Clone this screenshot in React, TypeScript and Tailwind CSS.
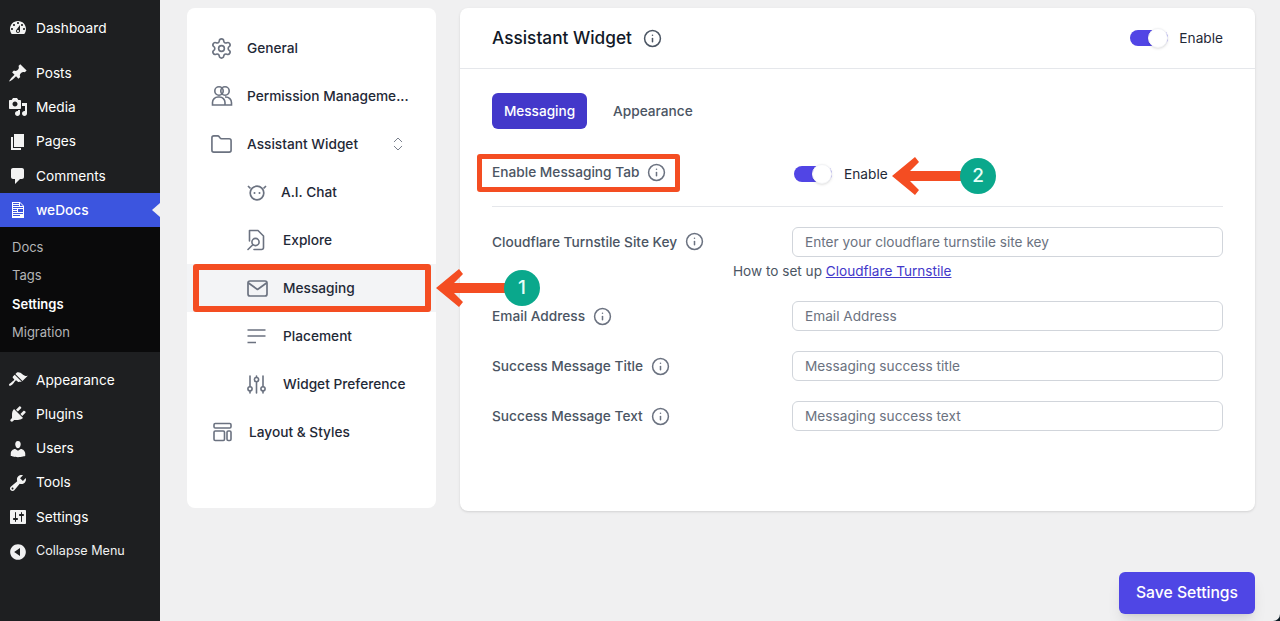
import React from "react";
import { Settings, Info, Folder, ChevronsUpDown } from "lucide-react";

const I = ({ d, className = "" }: { d: string; className?: string }) => (
  <svg viewBox="0 0 20 20" className={"w-5 h-5 fill-current " + className}><path d={d} /></svg>
);

const ic = {
  dashboard: "M3.76 16h12.48c1.1-1.37 1.76-3.11 1.76-5 0-4.42-3.58-8-8-8s-8 3.58-8 8c0 1.89.66 3.63 1.76 5zM10 4c.55 0 1 .45 1 1s-.45 1-1 1-1-.45-1-1 .45-1 1-1zM6 6c.55 0 1 .45 1 1s-.45 1-1 1-1-.45-1-1 .45-1 1-1zm8 0c.55 0 1 .45 1 1s-.45 1-1 1-1-.45-1-1 .45-1 1-1zm-5.37 5.55L12 7v6c0 1.1-.9 2-2 2s-2-.9-2-2c0-.57.24-1.08.63-1.45zM4 10c.55 0 1 .45 1 1s-.45 1-1 1-1-.45-1-1 .45-1 1-1zm12 0c.55 0 1 .45 1 1s-.45 1-1 1-1-.45-1-1 .45-1 1-1zm-5 3c0-.55-.45-1-1-1s-1 .45-1 1 .45 1 1 1 1-.45 1-1z",
  post: "M10.44 3.02l1.82-1.82 6.36 6.35-1.83 1.82c-1.05-.68-2.48-.57-3.41.36l-.75.75c-.92.93-1.04 2.35-.35 3.41l-1.83 1.82-2.41-2.41-2.8 2.79c-.42.42-3.38 2.71-3.8 2.29s1.86-3.39 2.28-3.81l2.79-2.79L4.1 9.36l1.83-1.82c1.05.69 2.48.57 3.4-.36l.75-.75c.93-.92 1.05-2.35.36-3.41z",
  media: "M13 11V4c0-.55-.45-1-1-1h-1.67L9 1H5L3.67 3H2c-.55 0-1 .45-1 1v7c0 .55.45 1 1 1h10c.55 0 1-.45 1-1zM7 4.5c1.38 0 2.5 1.12 2.5 2.5S8.38 9.5 7 9.5 4.5 8.38 4.5 7 5.62 4.5 7 4.5zM14 6h5v10.5c0 1.38-1.12 2.5-2.5 2.5S14 17.88 14 16.5s1.12-2.5 2.5-2.5c.17 0 .34.02.5.05V9h-3V6zm-4 8.05V13h2v3.5c0 1.38-1.12 2.5-2.5 2.5S7 17.88 7 16.5 8.12 14 9.5 14c.17 0 .34.02.5.05z",
  page: "M6 15V2h10v13H6zm-1 1h8v2H3V5h2v11z",
  comments: "M5 2h9c1.1 0 2 .9 2 2v7c0 1.1-.9 2-2 2h-2l-5 5v-5H5c-1.1 0-2-.9-2-2V4c0-1.1.9-2 2-2z",
  doc: "M12 2l4 4v12H4V2h8zM5 3v1h6V3H5zm7 3h3l-3-3v3zM5 5v1h6V5H5zm10 3V7H5v1h10zM5 9v1h4V9H5zm10 3V9h-5v3h5zM5 11v1h4v-1H5zm10 3v-1H5v1h10zm-3 2v-1H5v1h7z",
  appearance: "M14.48 11.06L7.41 3.99l1.5-1.5c.5-.56 2.3-.47 3.51.32 1.21.8 1.43 1.28 2.91 2.1 1.18.64 2.45 1.26 4.45.85zm-.71.71L6.7 4.7 4.93 6.47c-.39.39-.39 1.02 0 1.41l1.06 1.06c.39.39.39 1.03 0 1.42-.6.6-1.43 1.11-2.21 1.69-.35.26-.7.53-1.01.84C1.43 13.23.4 14.75 1.2 15.55c.8.79 2.32-.23 3.65-1.57.31-.31.58-.66.85-1.02.57-.78 1.08-1.61 1.69-2.21.39-.39 1.02-.39 1.41 0l1.06 1.06c.39.39 1.02.39 1.41 0z",
  plugins: "M13.11 4.36L9.87 7.6 8 5.73l3.24-3.24c.35-.34 1.05-.2 1.56.32.52.51.66 1.21.31 1.55zm-8 1.77l.91-1.12 9.01 9.01-1.19.84c-.71.71-2.63 1.16-3.82 1.16H6.14L4.9 17.26c-.59.59-1.54.59-2.12 0-.59-.58-.59-1.53 0-2.12l1.24-1.24v-3.88c0-1.13.4-3.19 1.09-3.89zm7.26 3.97l3.24-3.24c.34-.35 1.04-.21 1.55.31.52.51.66 1.21.31 1.55l-3.24 3.25z",
  users: "M10 9.25c-2.27 0-2.73-3.44-2.73-3.44C7 4.02 7.82 2 9.97 2c2.16 0 2.98 2.02 2.71 3.81 0 0-.41 3.44-2.68 3.44zm0 2.57L12.72 10c2.39 0 4.52 2.33 4.52 4.53v2.49s-3.65 1.13-7.24 1.13c-3.65 0-7.24-1.13-7.24-1.13v-2.49c0-2.25 1.94-4.48 4.47-4.48z",
  tools: "M16.68 9.77c-1.34 1.34-3.3 1.67-4.95.99l-5.41 6.52c-.99.99-2.59.99-3.58 0s-.99-2.59 0-3.57l6.52-5.42c-.68-1.65-.35-3.61.99-4.95 1.28-1.28 3.12-1.62 4.72-1.06l-2.89 2.89 2.82 2.82 2.86-2.87c.53 1.58.18 3.39-1.08 4.65zM3.81 16.21c.4.39 1.04.39 1.43 0 .4-.4.4-1.04 0-1.43-.39-.4-1.03-.4-1.43 0-.39.39-.39 1.03 0 1.43z",
  settings: "M18 16V4c0-.55-.45-1-1-1H3c-.55 0-1 .45-1 1v12c0 .55.45 1 1 1h14c.55 0 1-.45 1-1zM8 11h1c.55 0 1 .45 1 1s-.45 1-1 1H8v1.5c0 .28-.22.5-.5.5s-.5-.22-.5-.5V13H6c-.55 0-1-.45-1-1s.45-1 1-1h1V5.5c0-.28.22-.5.5-.5s.5.22.5.5V11zm5-2h-1c-.55 0-1-.45-1-1s.45-1 1-1h1V5.5c0-.28.22-.5.5-.5s.5.22.5.5V7h1c.55 0 1 .45 1 1s-.45 1-1 1h-1v5.5c0 .28-.22.5-.5.5s-.5-.22-.5-.5V9z",
  collapse: "M10 2.16c4.33 0 7.84 3.51 7.84 7.84s-3.51 7.84-7.84 7.84S2.16 14.33 2.16 10 5.71 2.16 10 2.16zm2 11.72V6.12L6.18 9.97z",
};

const Row = ({ icon, label }: { icon: string; label: string }) => (
  <div className="flex h-[34.2px] items-center pl-[8px] text-[13.7px] text-white">
    <I d={icon} className="text-[#f2f2f2] shrink-0" />
    <span className="ml-[8px]">{label}</span>
  </div>
);

const Sub = ({ label, bold }: { label: string; bold?: boolean }) => (
  <div className={"flex h-[28.4px] items-center pl-[12px] text-[13px] " + (bold ? "font-semibold text-white" : "text-[#b4b5b7]")}>{label}</div>
);

const Toggle = () => (
  <div className="relative h-[16px] w-[38px] rounded-full bg-[#5145e5]">
    <div className="absolute right-0 top-[-2px] h-[20px] w-[20px] rounded-full border border-gray-100 bg-white shadow" />
  </div>
);

const NavItem = ({ icon, label, indent, active, right }: { icon: React.ReactNode; label: string; indent?: boolean; active?: boolean; right?: React.ReactNode }) => (
  <div className={"flex h-[48px] items-center text-[13.7px] font-medium text-[#1f2937] " + (indent ? "pl-[60px] " : "pl-[24px] ") + (active ? "bg-[#f3f4f6]" : "")}>
    <div className="flex w-[36px] shrink-0 items-center">{icon}</div>
    <span>{label}</span>
    {right}
  </div>
);

const Field = ({ label, placeholder }: { label: string; placeholder: string }) => (
  <div className="flex items-center">
    <div className="flex w-[300px] items-center gap-[8px] text-[13.7px] font-medium text-[#4b5563]">
      {label}
      <Info size={19} strokeWidth={1.9} className="text-[#6b7280]" />
    </div>
    <div className="flex h-[30px] w-[431px] items-center rounded-md border border-[#d1d5db] bg-white px-[12px] text-[13.66px] text-[#6b7280]">{placeholder}</div>
  </div>
);

const Badge = ({ n }: { n: number }) => (
  <div className="flex h-[36px] w-[36px] items-center justify-center rounded-full bg-[#0aa88c] text-[19px] font-medium text-[#e6fff8]">{n}</div>
);

const Arrow = ({ width }: { width: number }) => (
  <svg width={width} height="38" viewBox={`0 0 ${width} 38`} className="block">
    <path d={`M0 19 L23 0 L27 5 L18 14 L${width} 14 L${width} 24 L18 24 L27 33 L23 38 Z`} fill="#f44d22" />
  </svg>
);

const ChatIcon = () => (
  <svg width="20" height="18" viewBox="0 0 20 18" fill="none" stroke="#6b7280" strokeWidth="1.7">
    <circle cx="10" cy="10" r="6.8" />
    <circle cx="7.5" cy="10" r="1" fill="#6b7280" stroke="none" />
    <circle cx="12.5" cy="10" r="1" fill="#6b7280" stroke="none" />
    <path d="M1 3l2.5 2.5M19 3l-2.5 2.5" />
  </svg>
);

const ExploreIcon = () => (
  <svg width="18" height="22" viewBox="0 0 18 22" fill="none" stroke="#6b7280" strokeWidth="1.6" strokeLinecap="round" strokeLinejoin="round">
    <path d="M2.5 12V1.5h8.5l5.5 5.5v11.5a2 2 0 0 1-2 2H7" />
    <circle cx="8.5" cy="13" r="3.6" />
    <path d="M5.8 15.7 1 20.5" />
  </svg>
);

const PeopleIcon = () => (
  <svg width="22" height="22" viewBox="0 0 22 22" fill="none" stroke="#6b7280" strokeWidth="1.6">
    <circle cx="8" cy="6" r="4.2" />
    <circle cx="14" cy="6" r="4.2" />
    <path d="M1.5 20v-2.5A5.5 5.5 0 0 1 7 12h1.5A5.5 5.5 0 0 1 14 17.5V20ZM14 12h.8a5.7 5.7 0 0 1 5.7 5.7V20H14" />
  </svg>
);

const LayoutIcon = () => (
  <svg width="20" height="20" viewBox="0 0 20 20" fill="none" stroke="#6b7280" strokeWidth="1.6">
    <rect x="1" y="1.5" width="17" height="4.5" rx="1.2" />
    <rect x="1" y="9" width="10.5" height="9.5" rx="1.2" />
    <rect x="14" y="9" width="4" height="9.5" rx="1.2" />
  </svg>
);

const MailIcon = () => (
  <svg width="21" height="17" viewBox="0 0 21 17" fill="none" stroke="#6b7280" strokeWidth="1.7" strokeLinejoin="round">
    <rect x="1" y="1" width="19" height="15" rx="2" />
    <path d="M1.5 3 10.5 9.5 19.5 3" />
  </svg>
);

const LinesIcon = () => (
  <svg width="19" height="16" viewBox="0 0 19 16" fill="none" stroke="#6b7280" strokeWidth="1.7">
    <path d="M0.5 2h18M0.5 8h18M0.5 14.5h8.5" />
  </svg>
);

const SlidersIcon = () => (
  <svg width="19" height="19" viewBox="0 0 19 19" fill="none" stroke="#6b7280" strokeWidth="1.6" strokeLinecap="round">
    <path d="M3 1v10.6M3 16v2M9.5 1v1M9.5 7v11M16 1v10.6M16 16v2" />
    <circle cx="3" cy="13.8" r="2.1" />
    <circle cx="9.5" cy="4.6" r="2.1" />
    <circle cx="16" cy="13.8" r="2.1" />
  </svg>
);

export default function App() {
  return (
    <div className="relative flex h-[621px] w-[1280px] overflow-hidden bg-[#f0f0f1] font-['Inter',sans-serif]">
      <aside className="flex w-[160px] shrink-0 flex-col bg-[#1e1f21]">
        <div className="mt-[11px]"><Row icon={ic.dashboard} label="Dashboard" /></div>
        <div className="mt-[11px]">
          <Row icon={ic.post} label="Posts" />
          <Row icon={ic.media} label="Media" />
          <Row icon={ic.page} label="Pages" />
          <Row icon={ic.comments} label="Comments" />
        </div>
        <div className="relative flex h-[34px] items-center bg-[#3c55df] pl-[8px] text-[13.7px] font-medium text-white">
          <I d={ic.doc} />
          <span className="ml-[8px]">weDocs</span>
          <div className="absolute right-0 top-[10px] h-0 w-0 border-y-[7px] border-r-[8px] border-y-transparent border-r-[#f0f0f1]" />
        </div>
        <div className="bg-[#0a0a0b] pb-[4.5px] pt-[6.5px]">
          <Sub label="Docs" />
          <Sub label="Tags" />
          <Sub label="Settings" bold />
          <Sub label="Migration" />
        </div>
        <div className="mt-[11.6px]">
          <Row icon={ic.appearance} label="Appearance" />
          <Row icon={ic.plugins} label="Plugins" />
          <Row icon={ic.users} label="Users" />
          <Row icon={ic.tools} label="Tools" />
          <Row icon={ic.settings} label="Settings" />
          <div className="flex h-[34px] items-center pl-[8px] pt-[1px] text-[12.6px] text-[#f0f0f1]">
            <I d={ic.collapse} />
            <span className="ml-[8px]">Collapse Menu</span>
          </div>
        </div>
      </aside>

      <main className="flex flex-1 items-start pl-[27px] pr-[25px] pt-[8px]">
        <nav className="h-[500px] w-[249px] shrink-0 rounded-lg bg-white pt-[16px]">
          <NavItem icon={<Settings size={23} strokeWidth={1.7} className="-ml-[1px] text-[#6b7280]" />} label="General" />
          <NavItem icon={<PeopleIcon />} label="Permission Manageme..." />
          <NavItem
            icon={<Folder size={23} strokeWidth={1.7} className="-ml-[1px] text-[#6b7280]" />}
            label="Assistant Widget"
            right={<ChevronsUpDown size={18} strokeWidth={1.2} className="ml-[30.5px] text-[#6b7280]" />}
          />
          <div className="flex h-[48px] items-center pl-[60px] text-[13.7px] font-medium text-[#1f2937]">
            <div className="flex w-[36px] shrink-0"><ChatIcon /></div>
            <span className="-ml-[2px]">A.I. Chat</span>
          </div>
          <NavItem indent icon={<ExploreIcon />} label="Explore" />
          <NavItem indent active icon={<MailIcon />} label="Messaging" />
          <NavItem indent icon={<LinesIcon />} label="Placement" />
          <NavItem indent icon={<SlidersIcon />} label="Widget Preference" />
          <div className="flex h-[48px] items-center pl-[26px] text-[13.7px] font-medium text-[#1f2937]">
            <div className="flex w-[36px] shrink-0"><LayoutIcon /></div>
            <span>Layout &amp; Styles</span>
          </div>
        </nav>

        <section className="ml-[24px] h-[503px] flex-1 rounded-lg bg-white shadow-sm">
          <header className="flex h-[61px] items-center border-b border-[#e5e7eb] pl-[32px] pr-[32px]">
            <h2 className="text-[17.25px] font-medium text-[#111827]">Assistant Widget</h2>
            <Info size={19} strokeWidth={1.9} className="ml-[11.5px] text-[#4b5563]" />
            <div className="ml-auto flex items-center gap-[11px]">
              <Toggle />
              <span className="pt-[1px] text-[13.7px] text-[#1f2937]">Enable</span>
            </div>
          </header>
          <div className="px-[32px] pt-[24px]">
            <div className="flex items-center gap-[26px]">
              <div className="flex h-[36px] w-[95px] items-center justify-center rounded-md bg-[#4338ca] text-[13.6px] font-medium text-white">Messaging</div>
              <span className="text-[13.7px] font-medium text-[#4b5563]">Appearance</span>
            </div>
            <div className="mb-[20px] mt-[26px] flex h-[52px] items-center border-b border-[#e5e7eb] pb-[16px]">
              <div className="flex w-[302px] items-center gap-[7.5px] text-[13.7px] font-medium text-[#4b5563]">
                Enable Messaging Tab
                <Info size={19} strokeWidth={1.9} className="text-[#6b7280]" />
              </div>
              <div className="flex items-center pt-[4px]">
                <Toggle />
                <span className="ml-[12px] text-[13.7px] text-[#1f2937]">Enable</span>
              </div>
            </div>
            <Field label="Cloudflare Turnstile Site Key" placeholder="Enter your cloudflare turnstile site key" />
            <div className="mt-[3.5px] pl-[241px] text-[13.6px] text-[#4b5563]">
              How to set up <a className="text-[#4338ca] underline">Cloudflare Turnstile</a>
            </div>
            <div className="mt-[20.5px] flex flex-col gap-[20px]">
              <Field label="Email Address" placeholder="Email Address" />
              <Field label="Success Message Title" placeholder="Messaging success title" />
              <Field label="Success Message Text" placeholder="Messaging success text" />
            </div>
          </div>
        </section>
      </main>

      <button className="absolute left-[1119px] top-[572px] flex h-[42px] w-[136px] items-center justify-center rounded-md bg-[#4f46e5] text-[15.7px] font-medium text-white shadow-lg">Save Settings</button>

      <div className="absolute left-[193px] top-[264px] h-[48px] w-[238px] rounded-[3px] border-[6px] border-[#f44d22]" />
      <div className="absolute left-[477px] top-[154px] h-[38px] w-[203px] rounded-[3px] border-[5.5px] border-[#f44d22]" />
      <div className="absolute left-[436px] top-[269px]"><Arrow width={72} /></div>
      <div className="absolute left-[504px] top-[270px]"><Badge n={1} /></div>
      <div className="absolute left-[892px] top-[157px]"><Arrow width={72} /></div>
      <div className="absolute left-[960px] top-[158px]"><Badge n={2} /></div>

      <div className="absolute bottom-0 right-0 h-[7px] w-[7px] bg-[#0b1a24]">
        <div className="h-full w-full rounded-br-[7px] bg-[#f0f0f1]" />
      </div>
    </div>
  );
}
